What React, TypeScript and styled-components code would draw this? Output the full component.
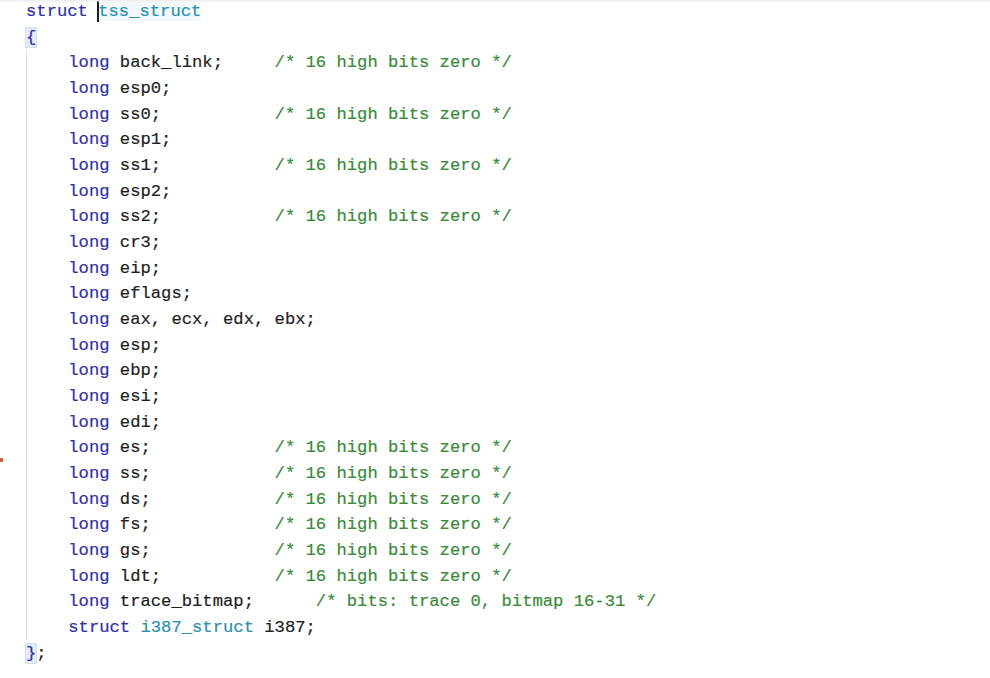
import React from "react";
import styled, { createGlobalStyle } from "styled-components";

const Global = createGlobalStyle`
  html, body { margin: 0; padding: 0; background: #ffffff; }
  body { width: 990px; height: 678px; overflow: hidden; }
`;

const Page = styled.div`
  position: relative;
  width: 990px;
  height: 678px;
  background: #ffffff;
  overflow: hidden;
`;

const TopShade = styled.div`
  position: absolute;
  left: 0;
  top: 0;
  width: 990px;
  height: 3px;
  background: linear-gradient(#ececec, rgba(255, 255, 255, 0));
`;

const Code = styled.div`
  margin-top: -1px;
  padding-left: 26px;
  font-family: "Liberation Mono", "DejaVu Sans Mono", monospace;
  font-size: 17.2px;
  line-height: 25.68px;
  color: #1e1e1e;
  white-space: pre;
  -webkit-text-stroke: 0.2px currentColor;
`;

const Line = styled.div`
  position: relative;
  height: 25.68px;
`;

const Body = styled.div`
  border-left: 1px solid #dcdcdc;
`;

const Kw = styled.span`
  color: #3030a8;
`;

const Type = styled.span<{ $hl?: boolean }>`
  color: #2b91af;
  background: ${(p) => (p.$hl ? "#f3f8fa" : "transparent")};
`;

const Cmt = styled.span`
  color: #3a8a3a;
`;

const Brace = styled.span`
  color: #3030a8;
  background: #e4ebf3;
  outline: 1px solid #d6dee8;
`;

const Caret = styled.span`
  position: absolute;
  left: 71px;
  top: 1px;
  width: 2px;
  height: 22px;
  background: #1a1a1a;
`;

const Dot = styled.div`
  position: absolute;
  left: 0;
  top: 458px;
  width: 3px;
  height: 4px;
  border-radius: 1px;
  background: #d9542c;
`;

const hb = "/* 16 high bits zero */";

type Member = { name: string; comment?: string; col?: number };

const members: Member[] = [
  { name: "back_link;", comment: hb },
  { name: "esp0;" },
  { name: "ss0;", comment: hb },
  { name: "esp1;" },
  { name: "ss1;", comment: hb },
  { name: "esp2;" },
  { name: "ss2;", comment: hb },
  { name: "cr3;" },
  { name: "eip;" },
  { name: "eflags;" },
  { name: "eax, ecx, edx, ebx;" },
  { name: "esp;" },
  { name: "ebp;" },
  { name: "esi;" },
  { name: "edi;" },
  { name: "es;", comment: hb },
  { name: "ss;", comment: hb },
  { name: "ds;", comment: hb },
  { name: "fs;", comment: hb },
  { name: "gs;", comment: hb },
  { name: "ldt;", comment: hb },
  { name: "trace_bitmap;", comment: "/* bits: trace 0, bitmap 16-31 */", col: 19 },
];

const padTo = (s: string, col: number) => s + " ".repeat(Math.max(1, col - s.length));

export default function App() {
  return (
    <Page>
      <Global />
      <Code>
        <Line>
          <Kw>struct</Kw> <Type $hl>tss_struct</Type>
          <Caret />
        </Line>
        <Line>
          <Brace>{"{"}</Brace>
        </Line>
        <Body>
          {members.map((m, i) => (
            <Line key={i}>
              {"    "}
              <Kw>long</Kw>{" "}
              {m.comment ? padTo(m.name, m.col ?? 15) : m.name}
              {m.comment ? <Cmt>{m.comment}</Cmt> : null}
            </Line>
          ))}
          <Line>
            {"    "}
            <Kw>struct</Kw> <Type>i387_struct</Type> i387;
          </Line>
        </Body>
        <Line>
          <Brace>{"}"}</Brace>;
        </Line>
      </Code>
      <TopShade />
      <Dot />
    </Page>
  );
}
